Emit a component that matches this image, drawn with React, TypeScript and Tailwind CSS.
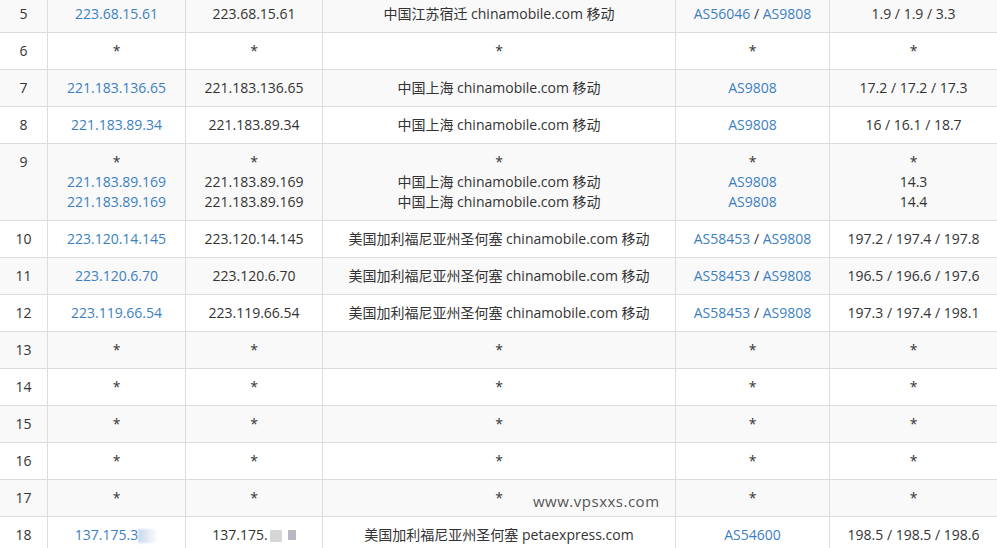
import React from "react";

type Row = { n: number; ip: string[]; host: string[]; loc: string[]; as: string[][]; rtt: string[] };

const star = (k: number) => Array(k).fill("*");
const rows: Row[] = [
  { n: 5, ip: ["223.68.15.61"], host: ["223.68.15.61"], loc: ["中国江苏宿迁 chinamobile.com 移动"], as: [["AS56046", "AS9808"]], rtt: ["1.9 / 1.9 / 3.3"] },
  { n: 6, ip: star(1), host: star(1), loc: star(1), as: [], rtt: star(1) },
  { n: 7, ip: ["221.183.136.65"], host: ["221.183.136.65"], loc: ["中国上海 chinamobile.com 移动"], as: [["AS9808"]], rtt: ["17.2 / 17.2 / 17.3"] },
  { n: 8, ip: ["221.183.89.34"], host: ["221.183.89.34"], loc: ["中国上海 chinamobile.com 移动"], as: [["AS9808"]], rtt: ["16 / 16.1 / 18.7"] },
  { n: 9, ip: ["*", "221.183.89.169", "221.183.89.169"], host: ["*", "221.183.89.169", "221.183.89.169"], loc: ["*", "中国上海 chinamobile.com 移动", "中国上海 chinamobile.com 移动"], as: [["*"], ["AS9808"], ["AS9808"]], rtt: ["*", "14.3", "14.4"] },
  { n: 10, ip: ["223.120.14.145"], host: ["223.120.14.145"], loc: ["美国加利福尼亚州圣何塞 chinamobile.com 移动"], as: [["AS58453", "AS9808"]], rtt: ["197.2 / 197.4 / 197.8"] },
  { n: 11, ip: ["223.120.6.70"], host: ["223.120.6.70"], loc: ["美国加利福尼亚州圣何塞 chinamobile.com 移动"], as: [["AS58453", "AS9808"]], rtt: ["196.5 / 196.6 / 197.6"] },
  { n: 12, ip: ["223.119.66.54"], host: ["223.119.66.54"], loc: ["美国加利福尼亚州圣何塞 chinamobile.com 移动"], as: [["AS58453", "AS9808"]], rtt: ["197.3 / 197.4 / 198.1"] },
  ...[13, 14, 15, 16, 17].map(n => ({ n, ip: star(1), host: star(1), loc: star(1), as: [], rtt: star(1) })),
  { n: 18, ip: ["137.175.3"], host: ["137.175."], loc: ["美国加利福尼亚州圣何塞 petaexpress.com"], as: [["AS54600"]], rtt: ["198.5 / 198.5 / 198.6"] },
];

const TD = "border border-[#dddddd] px-2 py-2 leading-5 align-top text-center";
const LINK = "text-[#3c7fc1]";

export default function App() {
  return (
    <div className="w-[997px] h-[548px] overflow-hidden bg-white text-[14px] text-[#333]" style={{ fontFamily: '"Open Sans", "Noto Sans CJK SC", sans-serif' }}>
      <div className="relative -mt-[5px]">
        <table className="border-collapse table-fixed w-[999px] -ml-px">
          <colgroup>
            <col style={{ width: 48 }} />
            <col style={{ width: 138 }} />
            <col style={{ width: 137 }} />
            <col style={{ width: 353 }} />
            <col style={{ width: 154 }} />
            <col />
          </colgroup>
          <tbody>
            {rows.map((r, i) => (
              <tr key={r.n} className={i % 2 === 0 ? "bg-[#f9f9f9]" : "bg-white"}>
                <td className={TD}>{r.n}</td>
                <td className={TD}>
                  {r.ip.map((t, j) => (
                    <div key={j} className={t === "*" ? "" : LINK}>
                      {t}
                      {r.n === 18 && <span className="inline-block w-[20px] h-[14px] align-middle bg-gradient-to-r from-[#c8d8ea] to-white blur-[1px]" />}
                    </div>
                  ))}
                </td>
                <td className={TD}>
                  {r.host.map((t, j) => (
                    <div key={j}>
                      {t}
                      {r.n === 18 && (
                        <span className="inline-flex gap-[6px] align-middle ml-[2px]">
                          <span className="w-[12px] h-[12px] bg-[#d6d6d6]" />
                          <span className="w-[8px] h-[10px] bg-[#b8b8c4]" />
                        </span>
                      )}
                    </div>
                  ))}
                </td>
                <td className={TD}>
                  {r.loc.map((t, j) => <div key={j}>{t}</div>)}
                </td>
                <td className={TD}>
                  {r.as.length === 0 ? "*" : r.as.map((a, j) => (
                    <div key={j}>
                      {a.map((x, k) => (
                        <React.Fragment key={k}>
                          {k > 0 && " / "}
                          <span className={x === "*" ? "" : LINK}>{x}</span>
                        </React.Fragment>
                      ))}
                    </div>
                  ))}
                </td>
                <td className={TD}>
                  {r.rtt.map((t, j) => <div key={j}>{t}</div>)}
                </td>
              </tr>
            ))}
          </tbody>
        </table>
        <div className="absolute left-[533px] top-[495px] text-[15px] text-[#555] tracking-[0.5px]">www.vpsxxs.com</div>
      </div>
    </div>
  );
}
